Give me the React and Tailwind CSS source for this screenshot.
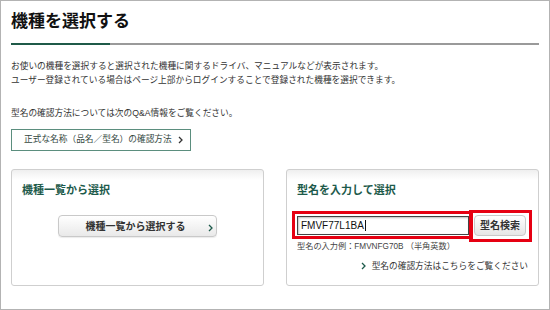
import React from "react";

const FONT = { fontFamily: '"Liberation Sans", "Noto Sans CJK JP", sans-serif' };

function Chevron({ className = "", color = "#333" }) {
  return (
    <svg width="5" height="8" viewBox="0 0 5 8" className={className}>
      <path d="M1 1 L4 4 L1 7" fill="none" stroke={color} strokeWidth="1.3" />
    </svg>
  );
}

export default function App() {
  return (
    <div
      className="w-[550px] h-[310px] border border-[#b3b3b3] bg-white px-[10px] text-[#333] overflow-hidden"
      style={FONT}
    >
      <h1 className="pt-[9px] h-[34px] text-[17px] leading-[24px] font-bold text-[#111]">
        機種を選択する
      </h1>
      <div className="mt-[8px] flex h-[2px]">
        <div className="w-[99px] bg-[#1f5a48]" />
        <div className="flex-1 bg-[#9a9a9a]" />
      </div>

      <div className="mt-[14px] text-[8.7px] leading-[14px]">
        <p>お使いの機種を選択すると選択された機種に関するドライバ、マニュアルなどが表示されます。</p>
        <p>ユーザー登録されている場合はページ上部からログインすることで登録された機種を選択できます。</p>
      </div>

      <p className="mt-[19px] text-[8.7px] leading-[14px]">
        型名の確認方法については次のQ&amp;A情報をご覧ください。
      </p>

      <div className="mt-[9px] w-[180px] h-[22px] border border-[#5b8e7e] flex items-center pl-[12px] pr-[7px] justify-between text-[8.7px] text-[#34483f]">
        <span>正式な名称（品名／型名）の確認方法</span>
        <Chevron color="#333" />
      </div>

      <div className="mt-[18px] flex gap-[22px]">
        <div className="w-[253px] h-[117px] border border-[#cfcfcf] rounded-[3px] bg-[linear-gradient(#efefef,#ffffff_10px)] px-[10px] pt-[13px]">
          <h2 className="text-[11px] leading-[14px] font-bold text-[#1d5a4b]">機種一覧から選択</h2>
          <div className="mt-[18px] mx-auto w-[159px] h-[22px] rounded-[4px] border border-[#c9c9c9] bg-[linear-gradient(#ffffff,#e9e9e9)] shadow-[0_1px_1px_rgba(0,0,0,0.08)] flex items-center relative">
            <span className="flex-1 text-center text-[10px] font-bold text-[#333] pr-[4px]">
              機種一覧から選択する
            </span>
            <Chevron className="absolute left-[149px] top-[8px]" color="#1d5a4b" />
          </div>
        </div>

        <div className="w-[253px] h-[117px] border border-[#cfcfcf] rounded-[3px] bg-[linear-gradient(#efefef,#ffffff_10px)] px-[10px] pt-[13px]">
          <h2 className="text-[11px] leading-[14px] font-bold text-[#1d5a4b]">型名を入力して選択</h2>
          <div className="mt-[18px] flex items-center gap-[5px]">
            <div className="relative w-[172px] h-[19px]">
              <div className="w-full h-full border border-[#444] shadow-[inset_1px_1px_2px_rgba(0,0,0,0.25)] flex items-center pl-[3px] text-[10px] text-[#111]">
                FMVF77L1BA<span className="ml-[1px] w-px h-[11px] bg-[#111]" />
              </div>
              <div className="absolute left-[-5px] top-[-5px] w-[181px] h-[28px] border-[3px] border-[#e60012]" />
            </div>
            <div className="relative w-[52px] h-[21px]">
              <div className="w-full h-full rounded-[4px] border border-[#c9c9c9] bg-[linear-gradient(#ffffff,#e6e6e6)] flex items-center justify-center text-[10px] font-bold text-[#333]">
                型名検索
              </div>
              <div className="absolute left-[-5px] top-[-5px] w-[63px] h-[32px] border-[3px] border-[#e60012]" />
            </div>
          </div>
          <p className="mt-[5px] text-[8.2px] leading-[11px] text-[#444]">
            型名の入力例：FMVNFG70B （半角英数）
          </p>
          <div className="mt-[8px] flex items-center justify-end gap-[6px] text-[8.7px] leading-[12px] text-[#333]">
            <Chevron color="#1d5a4b" />
            <span>型名の確認方法はこちらをご覧ください</span>
          </div>
        </div>
      </div>
    </div>
  );
}
